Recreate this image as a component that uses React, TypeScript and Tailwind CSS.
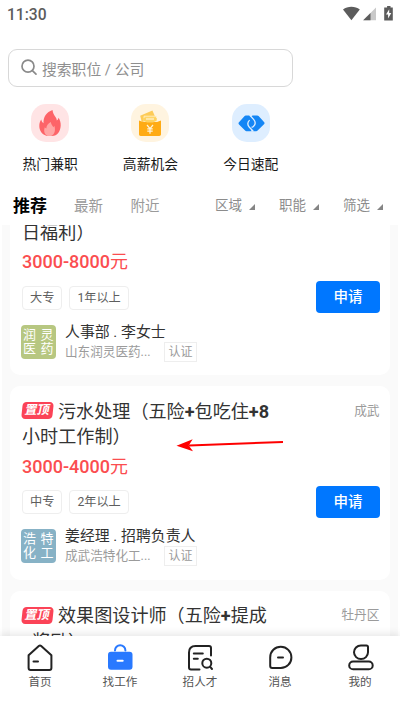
import type { ReactNode } from "react";

interface Job {
  id: number;
  title: ReactNode;
  pinned?: boolean;
  area?: string;
  detail?: {
    salary: string;
    tags: string[];
    avatar: [string, string];
    avatarClass: string;
    contact: string;
    company: string;
  };
}

const JOBS: Job[] = [
  {
    id: 1,
    title: (
      <>
        <br />
        日福利）
      </>
    ),
    detail: {
      salary: "3000-8000",
      tags: ["大专", "1年以上"],
      avatar: ["润灵", "医药"],
      avatarClass: "bg-[#b7c781]",
      contact: "人事部 . 李女士",
      company: "山东润灵医药...",
    },
  },
  {
    id: 2,
    title: (
      <>
        污水处理（五险<b>+</b>包吃住<b>+8</b>
        <br />
        小时工作制）
      </>
    ),
    pinned: true,
    area: "成武",
    detail: {
      salary: "3000-4000",
      tags: ["中专", "2年以上"],
      avatar: ["浩特", "化工"],
      avatarClass: "bg-[#87b2c6]",
      contact: "姜经理 . 招聘负责人",
      company: "成武浩特化工...",
    },
  },
  {
    id: 3,
    title: (
      <>
        效果图设计师（五险<b>+</b>提成
        <br />
        <b>+</b>奖励）
      </>
    ),
    pinned: true,
    area: "牡丹区",
  },
];

function StatusBar() {
  return (
    <div className="flex h-7 items-center justify-between pl-[7px] pr-[6px] text-[#5c5c5c]">
      <span className="mt-[1px] text-[15.6px] font-medium leading-7">11:30</span>
      <svg width="51" height="16" viewBox="0 0 51 16" className="mt-[-1px]">
        <path d="M0 3.6C4.6-.1 12.2-.1 16.8 3.6L8.4 14.2Z" fill="#5c5c5c" />
        <path d="M33 1.5V14.3H20.2Z" fill="#c9c9c9" />
        <path d="M27.5 7V14.3H20.2Z" fill="#5c5c5c" />
        <path d="M44.1 0h3.4v1.6h2.3V14.4h-8.6V1.6h2.9Z" fill="#5c5c5c" />
        <path d="M46.2 3.2 43 8.5h2.1v4l3.2-5.4h-2.1Z" fill="#fff" />
      </svg>
    </div>
  );
}

function SearchBox() {
  return (
    <div className="ml-2 mt-[21px] flex h-[38px] w-[285px] items-center rounded-[9px] border border-[#d8d8d8] pl-3 text-[14.8px] text-[#8f8f8f]">
      <svg width="17" height="17" viewBox="0 0 17 17" fill="none" stroke="#8a8a8a" strokeWidth="1.7" className="mt-[-1px]">
        <circle cx="7" cy="7.2" r="6" />
        <path d="m11.4 11.6 3.6 3.6" strokeLinecap="round" />
      </svg>
      <span className="ml-1 mt-1 leading-5">搜索职位 / 公司</span>
    </div>
  );
}

function FireIcon() {
  return (
    <svg width="38" height="38" viewBox="0 0 38 38">
      <path
        d="M21.500 6c.4 3.200 1.600 5 3 7 .9 1.300 1.300 2.300 1.300 3.600.9-.7 1.500-1.600 1.800-2.900 1.400 2.300 2.300 5 2.100 8C29.300 27.500 26.500 31.800 21 32h-5c-5-1.500-7.700-5.300-7.700-10 0-3 .8-5 2-6.600.3 1.900 1 2.900 2.200 3.800C12.200 13 15.500 8 21.500 6Z"
        fill="#fd6468"
      />
      <path
        d="M19.800 18c.5 2.600 1.600 3.500 2.500 5.200.4-.3.8-.8 1-1.400 1.400 4 .7 8.400-3.100 10.200h-3.600c-3.100-1.500-4.200-4.800-2.800-8.700.5.7.8 1.100 1.500 1.300.1-3 1.700-5.300 4.500-6.600Z"
        fill="#ffa6a5"
      />
    </svg>
  );
}

function WalletIcon() {
  return (
    <svg width="38" height="38" viewBox="0 0 38 38">
      <path d="m9.200 11.700 12.200-5.200 3.700 8.500-14.400 3Z" fill="#fdcb58" />
      <path d="M13 12.200h12.500v5H13Z" fill="#ffd669" stroke="#fff1d2" strokeWidth=".8" />
      <path d="M8 16.500 12 18h14l4-1.500v13.800c0 1-.7 1.700-1.700 1.700H9.700C8.700 32 8 31.300 8 30.300Z" fill="#ffab14" />
      <path d="M12.200 14h13.500v2.600L22 18.500h-6l-3.800-2Z" fill="#fed261" />
      <path d="M15 15h8" stroke="#fff3d6" strokeWidth="1.2" />
      <path d="m16 21 3 3.600 3-3.600M19 24.500V29.800M16.300 24.900h5.400M16.300 27.200h5.400" fill="none" stroke="#fff4dc" strokeWidth="1.2" />
    </svg>
  );
}

function MatchIcon() {
  return (
    <svg width="38" height="38" viewBox="0 0 38 38">
      <path
        d="M13.800 11.500h11.400c.6 0 1 .2 1.400.6l5.400 6c.7.8.7 1.400 0 2.200l-6.400 6.300c-.4.4-.8.6-1.400.6H14.500c-.6 0-1-.2-1.400-.6L7 20.400c-.7-.8-.7-1.400 0-2.200l5.400-6c.4-.5.8-.7 1.400-.7Z"
        fill="#1486f5"
      />
      <path d="M17 11h3.600l-1.500 1.700ZM22 27.600h-3.600l1.500-1.700Z" fill="#deeeff" />
      <path
        d="m17.800 11.300 3.800 4.100c2 2.300 2 5-.2 7.100-.6.5-1.200.7-1.900.7M21.200 27.300l-3.800-4.100c-2-2.300-2-5 .2-7.100"
        fill="none"
        stroke="#deeeff"
        strokeWidth="1.3"
      />
    </svg>
  );
}

function Shortcut({ label, className, children }: { label: string; className: string; children: ReactNode }) {
  return (
    <div className="flex w-[100.3px] flex-col items-center">
      <div className={`h-[38px] w-[38px] rounded-[15px] ${className}`}>{children}</div>
      <span className="mt-3 text-[13.8px] leading-5 text-[#1a1a1a]">{label}</span>
    </div>
  );
}

function Filter({ label }: { label: string }) {
  return (
    <div className="flex shrink-0 items-center text-[#8c8c8c]">
      <span className="mt-[-1px] text-[13.5px] leading-5">{label}</span>
      <svg width="6" height="6" viewBox="0 0 6 6" className="ml-[7px] mt-[3px]">
        <path d="M6 0v6H0Z" fill="#858585" />
      </svg>
    </div>
  );
}

function Tabs() {
  return (
    <div className="mb-[5px] mt-[17px] flex h-[29px] items-center justify-between pl-[13px] pr-[17px]">
      <div className="flex items-center">
        <span className="w-[61px] text-[17px] font-bold leading-6 text-black">推荐</span>
        <span className="mt-[2px] w-[56.5px] text-[14.5px] leading-6 text-[#9a9a9a]">最新</span>
        <span className="mt-[2px] text-[14.5px] leading-6 text-[#9a9a9a]">附近</span>
      </div>
      <div className="flex gap-6">
        <Filter label="区域" />
        <Filter label="职能" />
        <Filter label="筛选" />
      </div>
    </div>
  );
}

function PinnedBadge() {
  return (
    <span className="mr-[5px] inline-flex h-[17px] w-[31px] -skew-x-6 items-center justify-center rounded-[4px] bg-[#fb4357] align-[3px] text-[12.4px] font-bold leading-none text-white">
      <span className="-skew-x-6">置顶</span>
    </span>
  );
}

function JobCard({ job }: { job: Job }) {
  const { detail } = job;

  return (
    <div className="h-[193.5px] shrink-0 rounded-[10px] bg-white px-3 pt-[12.5px]">
      <div className="flex h-[51px] justify-between">
        <h3 className="whitespace-nowrap text-[18.1px] leading-[25.5px] text-[#333]">
          {job.pinned && <PinnedBadge />}
          {job.title}
        </h3>
        <span className="mr-[-1.5px] text-[12.7px] leading-[23px] text-[#9b9b9b]">{job.area}</span>
      </div>
      {detail && (
        <>
          <div className="mt-1 text-[18px] leading-[25px] text-[#fb4d50]">
            <span className="font-medium">{detail.salary}</span>元
          </div>
          <div className="mt-[7px] flex h-8 items-center gap-[7px]">
            {detail.tags.map((tag) => (
              <span
                key={tag}
                className="mt-[1px] flex h-6 items-center rounded-[4px] border border-[#eee] px-[7px] text-[12.2px] leading-5 text-[#5e5e5e]"
              >
                {tag}
              </span>
            ))}
            <button className="ml-auto mr-[-2px] h-8 w-16 rounded-[4px] bg-[#0077ff] pt-[2px] text-[14.5px] font-medium text-white">
              申请
            </button>
          </div>
          <div className="ml-[-1px] mt-[11px] flex">
            <div
              className={`mt-[0.5px] flex h-[34px] w-[34.5px] flex-col justify-center rounded-[4px] px-[2px] text-[13px] leading-[14px] text-white ${detail.avatarClass}`}
            >
              {detail.avatar.map((row) => (
                <span key={row} className="flex justify-between">
                  <span>{row[0]}</span>
                  <span>{row[1]}</span>
                </span>
              ))}
            </div>
            <div className="ml-[9.5px] mt-[-3.5px]">
              <div className="text-[14.9px] leading-[22px] text-[#333]">{detail.contact}</div>
              <div className="mt-[-1px] flex items-center">
                <span className="w-[99px] text-[12.6px] leading-5 text-[#9b9b9b]">{detail.company}</span>
                <span className="flex h-5 w-[33px] items-center justify-center border border-[#eee] text-[12px] text-[#9b9b9b]">
                  认证
                </span>
              </div>
            </div>
          </div>
        </>
      )}
    </div>
  );
}

function NavItem({ label, children }: { label: string; children: ReactNode }) {
  return (
    <div className="flex w-20 flex-col items-center pt-2">
      <svg
        width="28"
        height="28"
        viewBox="0 0 28 28"
        fill="none"
        stroke="#222"
        strokeWidth="2"
        strokeLinecap="round"
        strokeLinejoin="round"
      >
        {children}
      </svg>
      <span className="mt-[1px] text-[11.6px] leading-[18px] text-[#555]">{label}</span>
    </div>
  );
}

function BottomNav() {
  return (
    <nav className="relative flex h-[76px] shrink-0 bg-white shadow-[0_-2px_8px_rgba(0,0,0,0.1)]">
      <NavItem label="首页">
        <path d="M2.600 11.300 12.800 2.100a1.800 1.800 0 0 1 2.400 0l10.200 9.200V24a2 2 0 0 1-2 2H4.600a2 2 0 0 1-2-2Z" />
        <path d="M7.500 17.600h4.500" />
      </NavItem>
      <NavItem label="找工作">
        <path d="M9 6.500a5.200 5.200 0 0 1 10.400 0" stroke="#2979ff" />
        <rect x="2" y="7.800" width="24.500" height="18" rx="3" fill="#2979ff" stroke="none" />
        <path d="M11.500 16.700h5.200" stroke="#fff" />
      </NavItem>
      <NavItem label="招人才">
        <path d="M25 11.500V4a2 2 0 0 0-2-2H9.500C5.500 2 3 4.500 3 8.500v15a2 2 0 0 0 2 2h8.500" />
        <path d="M7.800 9.500h9M7.800 14.800h4" />
        <circle cx="20.800" cy="19.200" r="4.500" />
        <path d="m24 22.700 2 2.300" />
      </NavItem>
      <NavItem label="消息">
        <path d="M14.800 2.800a10.600 10.600 0 1 1 0 21.200H6.200a2 2 0 0 1-2-2v-8.600C4.200 7.200 9 2.800 14.800 2.800Z" />
        <path d="M12 13.400h5" />
      </NavItem>
      <NavItem label="我的">
        <path d="M14.900 1.500h5.500a1.600 1.600 0 0 1 1.600 1.600v5.200a7 6.800 0 1 1-7.100-6.800Z" />
        <rect x="3.200" y="17.500" width="23.500" height="7.800" rx="3.900" />
      </NavItem>
    </nav>
  );
}

// Hand-drawn pointer laid over the list
function Arrow() {
  return (
    <svg width="110" height="16" viewBox="0 0 110 16" className="pointer-events-none absolute left-[175px] top-[437px]">
      <path d="M14 8.500 108 5" stroke="#fe0000" strokeWidth="2" />
      <path d="m1.500 8.700 16.200-6.400-4 6.200 4.300 5.700Z" fill="#fe0000" />
    </svg>
  );
}

export default function App() {
  return (
    <div className="relative flex h-[712px] w-[400px] flex-col overflow-hidden bg-white font-['Roboto','Noto_Sans_CJK_SC',sans-serif]">
      <StatusBar />
      <SearchBox />
      <div className="mt-[17px] flex">
        <Shortcut label="热门兼职" className="bg-[#ffe4e5]">
          <FireIcon />
        </Shortcut>
        <Shortcut label="高薪机会" className="bg-[#fff4e0]">
          <WalletIcon />
        </Shortcut>
        <Shortcut label="今日速配" className="bg-[#deeeff]">
          <MatchIcon />
        </Shortcut>
      </div>
      <Tabs />
      <main className="mx-[2px] flex min-h-0 flex-1 flex-col overflow-hidden bg-[#fafafa] px-2">
        <div className="mt-[-43.5px] flex flex-col gap-[11px]">
          {JOBS.map((job) => (
            <JobCard key={job.id} job={job} />
          ))}
        </div>
      </main>
      <BottomNav />
      <Arrow />
    </div>
  );
}
